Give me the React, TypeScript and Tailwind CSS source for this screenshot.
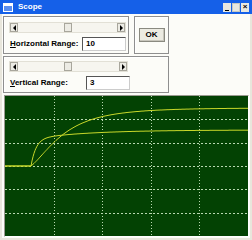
import React from "react";

const W = 243;
const H = 140;

function traceA(x: number) {
  if (x < 26) return 70;
  const t = x - 26;
  return 70 - 27 * (1 - Math.exp(-t / 5)) - 9 * (1 - Math.exp(-t / 55));
}

function traceB(x: number) {
  if (x < 26) return 70;
  const t = x - 26;
  const s = 1 - (1 + t / 16) * Math.exp(-t / 16);
  return 70 - 58 * (0.4 * s + 0.6 * (1 - Math.exp(-t / 45)));
}

function pts(f: (x: number) => number) {
  const out: string[] = [];
  for (let x = 0; x <= W; x += 1) out.push(`${x},${f(x).toFixed(1)}`);
  return out.join(" ");
}

function ScrollBar() {
  return (
    <div className="flex h-[11px] w-full border border-[#e2e0d6] bg-[#f6f5ef]">
      <div className="flex h-full w-[8px] items-center justify-center border border-[#a8a69c] bg-[#ecebe4]">
        <div className="h-0 w-0 border-y-[3px] border-r-[3px] border-y-transparent border-r-black" />
      </div>
      <div className="flex-1 pl-[46px]">
        <div className="h-full w-[8px] border border-[#a8a69c] bg-[#ecebe4]" />
      </div>
      <div className="flex h-full w-[8px] items-center justify-center border border-[#a8a69c] bg-[#ecebe4]">
        <div className="h-0 w-0 border-y-[3px] border-l-[3px] border-y-transparent border-l-black" />
      </div>
    </div>
  );
}

function Field({ label, first, value }: { label: string; first: string; value: string }) {
  return (
    <div className="flex items-center justify-between">
      <span className="whitespace-nowrap pl-[1px] text-[8px] font-bold text-black">
        <span className="underline">{first}</span>
        {label}
      </span>
      <div className="flex h-[14px] w-[44px] shrink-0 items-center border border-[#555] border-r-[#ccc] border-b-[#ccc] bg-white pl-[3px] text-[8px] font-bold">
        {value}
      </div>
    </div>
  );
}

function Group({ className, children }: { className: string; children: React.ReactNode }) {
  return <div className={`border border-[#8f8f8f] shadow-[inset_1px_1px_0_#fff] ${className}`}>{children}</div>;
}

export default function App() {
  const vx = [1, 2, 3, 4].map((i) => Math.round((W / 5) * i) + 0.5);
  const hy = [1, 2, 3, 4, 5].map((i) => Math.round((H / 6) * i) + 0.5);
  return (
    <div
      className="flex h-[240px] w-[252px] flex-col bg-[#fcfcf8]"
      style={{ fontFamily: '"Liberation Sans", "DejaVu Sans", sans-serif' }}
    >
      <div className="flex h-[14px] items-center bg-[#1560e8] pl-[3px] pr-[3px]">
        <div className="h-[9px] w-[10px] border border-white bg-[#5a8ef0] shadow-[inset_0_2px_0_#fff]" />
        <span className="ml-[5px] text-[8px] font-bold text-white">Scope</span>
        <div className="ml-auto flex gap-[1px]">
          <div className="flex h-[9px] w-[8px] items-end justify-center bg-[#e8e8e0] pb-[1px]">
            <div className="h-[1px] w-[4px] bg-black" />
          </div>
          <div className="h-[9px] w-[8px] border border-[#c8c8c0] bg-[#e8e8e0]" />
          <div className="flex h-[9px] w-[8px] items-center justify-center bg-[#e8e8e0] text-[8px] font-bold leading-none text-black">
            ×
          </div>
        </div>
      </div>
      <div className="flex flex-1 flex-col border-x-[2px] border-b-[2px] border-[#e8e6dc] px-[1px] pt-[2px]">
        <div className="flex gap-[5px]">
          <Group className="flex h-[38px] w-[126px] flex-col gap-[4px] pl-[5px] pr-[2px] pt-[5px]">
            <ScrollBar />
            <Field first="H" label="orizontal Range:" value="10" />
          </Group>
          <Group className="flex h-[38px] w-[35px] items-start justify-center pt-[11px]">
            <div className="flex h-[14px] w-[26px] items-center justify-center border border-[#8a8a80] bg-[#ecebe2] text-[8px] font-bold shadow-[inset_-1px_-1px_0_#c8c6bc]">
              OK
            </div>
          </Group>
        </div>
        <Group className="mt-[2px] flex h-[37px] w-[166px] flex-col gap-[4px] px-[5px] pt-[4px]">
          <div className="w-[119px]">
            <ScrollBar />
          </div>
          <div className="w-[121px]">
            <Field first="V" label="ertical Range:" value="3" />
          </div>
        </Group>
        <div className="mt-[2px] ml-[1px] w-[245px] border border-[#9a9a90] border-r-white border-b-white">
          <svg width={W} height={H} className="block bg-[#034203]">
            {vx.map((x) => (
              <line key={x} x1={x} y1={0} x2={x} y2={H} stroke="#b8d8b0" strokeWidth={1} strokeDasharray="1 2" />
            ))}
            {hy.map((y) => (
              <line key={y} x1={0} y1={y} x2={W} y2={y} stroke="#b8d8b0" strokeWidth={1} strokeDasharray="2 2" />
            ))}
            <polyline points={pts(traceB)} fill="none" stroke="#c8d82a" strokeWidth={1} />
            <polyline points={pts(traceA)} fill="none" stroke="#c8d82a" strokeWidth={1} />
          </svg>
        </div>
      </div>
    </div>
  );
}
